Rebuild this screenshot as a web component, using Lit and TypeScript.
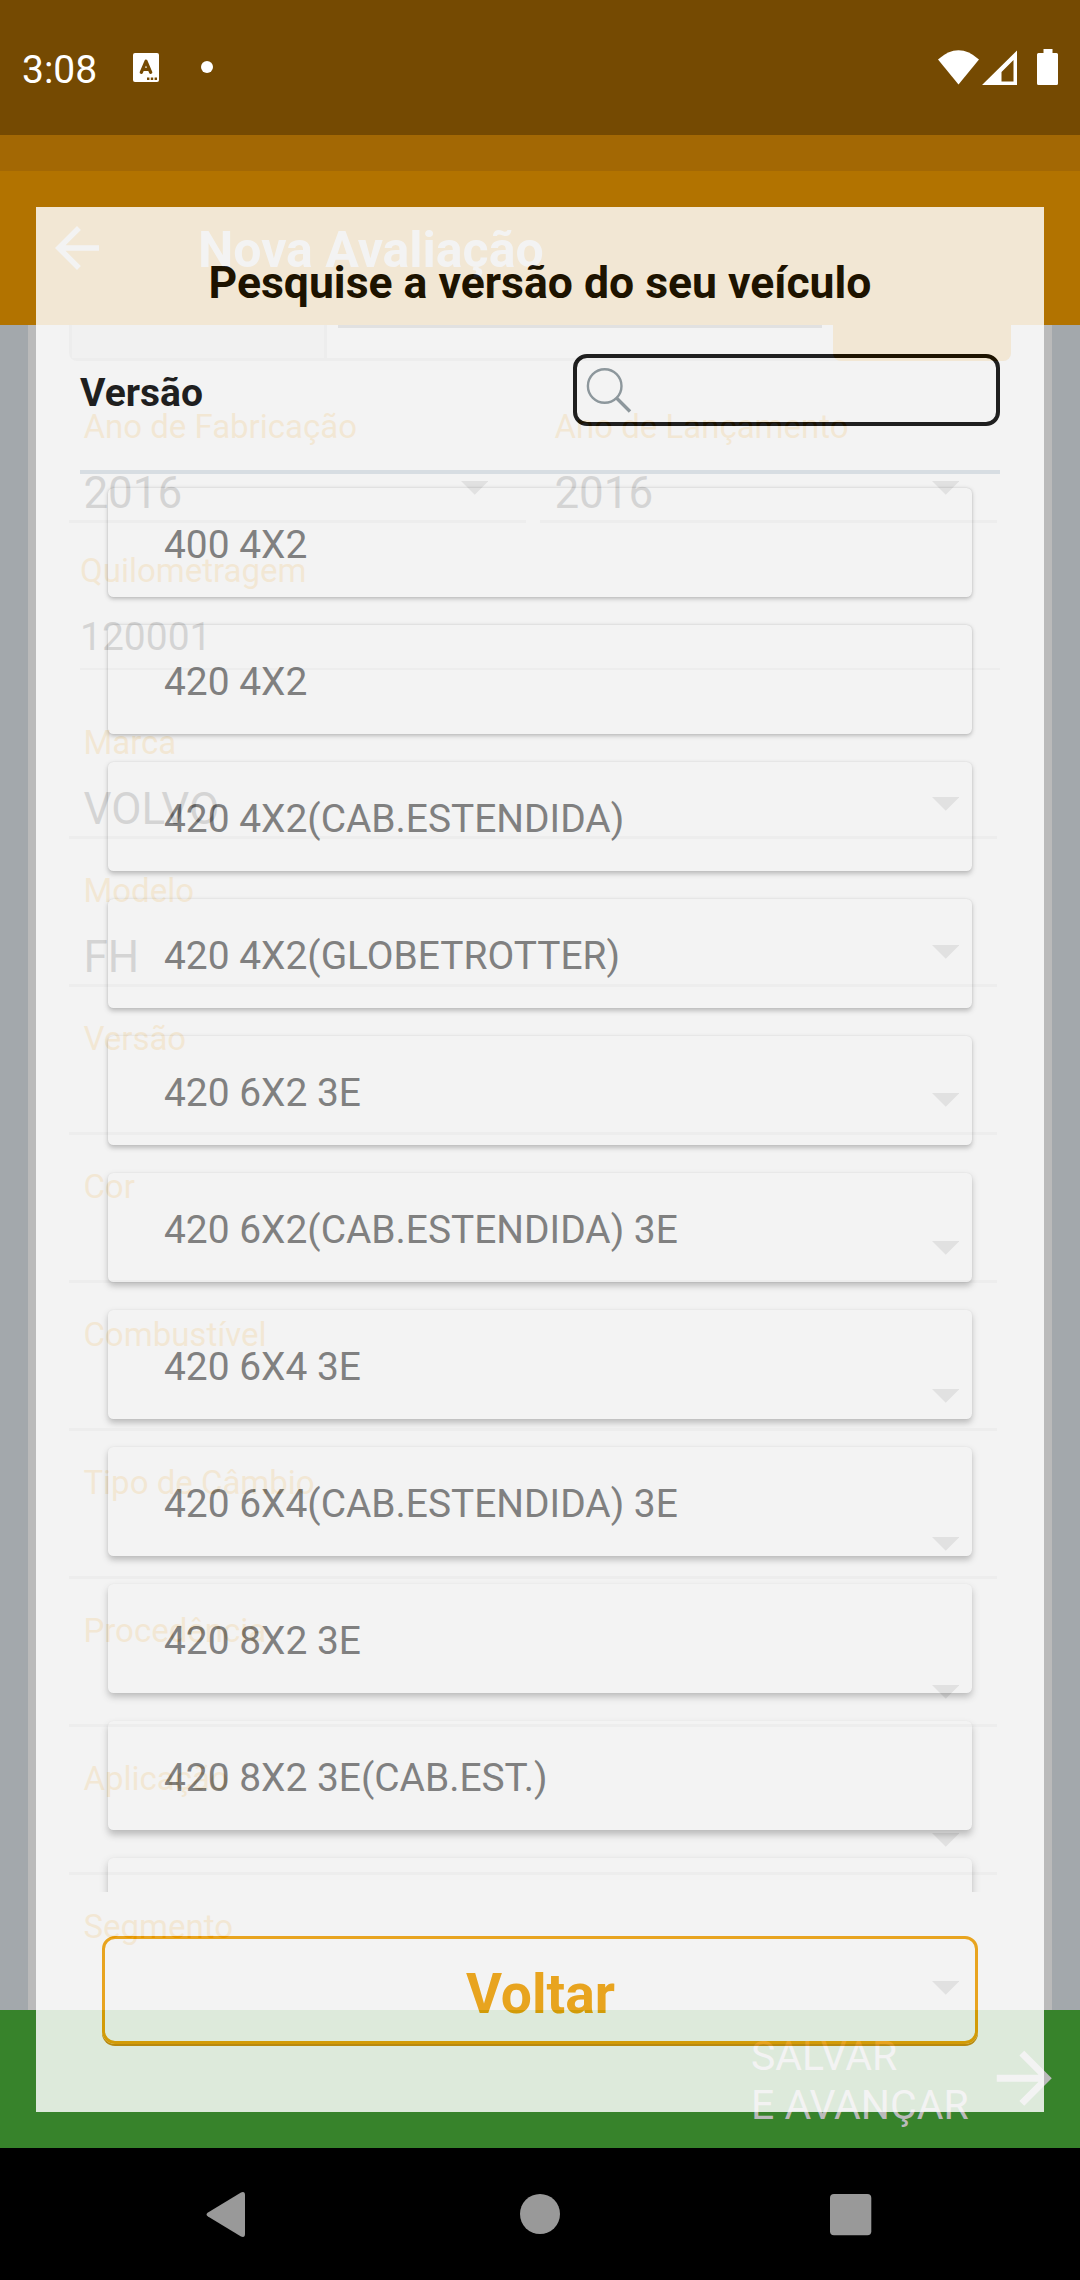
import { LitElement, html, css, svg } from "lit";
import { customElement } from "lit/decorators.js";

const VERSIONS = [
  "400 4X2",
  "420 4X2",
  "420 4X2(CAB.ESTENDIDA)",
  "420 4X2(GLOBETROTTER)",
  "420 6X2 3E",
  "420 6X2(CAB.ESTENDIDA) 3E",
  "420 6X4 3E",
  "420 6X4(CAB.ESTENDIDA) 3E",
  "420 8X2 3E",
  "420 8X2 3E(CAB.EST.)",
  "",
];

const FIELDS: Array<[string, string]> = [
  ["Marca", "VOLVO"],
  ["Modelo", "FH"],
  ["Versão", ""],
  ["Cor", ""],
  ["Combustível", ""],
  ["Tipo de Câmbio", ""],
  ["Procedência", ""],
  ["Aplicação", ""],
  ["Segmento", ""],
];

const arrowBack = svg`<path d="M20 11H7.83l5.59-5.59L12 4l-8 8 8 8 1.41-1.41L7.83 13H20v-2z"/>`;
const arrowForward = svg`<path d="M12 4l-1.41 1.41L16.17 11H4v2h12.17l-5.58 5.59L12 20l8-8z"/>`;

@customElement("form-page")
class FormPage extends LitElement {
  static styles = css`
    :host {
      display: flex;
      flex-direction: column;
      height: 2148px;
      background: #a3a8ac;
      font-family: Roboto, "Liberation Sans", sans-serif;
    }
    .strip { flex: none; height: 36px; margin-top: 135px; background: #a36804; }
    .appbar {
      flex: none;
      height: 154px;
      box-sizing: border-box;
      background: #b27300;
      color: #bababa;
      fill: #bababa;
      display: flex;
      align-items: center;
      padding-left: 44px;
      font-size: 50px;
      font-weight: 700;
    }
    .back { width: 66px; height: 66px; margin-right: 88px; }
    .heading { padding-top: 3px; }
    .body { flex: 1; overflow: hidden; margin: 0 28px; padding: 0 55px 0 41px; background: #bababa; }
    .plate {
      height: 36px;
      box-sizing: border-box;
      width: 942px;
      display: flex;
      border: 3px solid #979797;
      border-top: 0;
      border-radius: 0 0 8px 8px;
    }
    .cell { width: 252px; border-right: 3px solid #979797; background: #b1b1b1; }
    .entry { width: 484px; height: 3px; margin-left: 11px; background: #515151; }
    .go { width: 178px; height: 36px; margin: 0 -3px 0 auto; background: #b27300; border-radius: 0 0 8px 8px; }
    .pair { display: flex; gap: 14px; margin-top: 14px; }
    .pair .field { width: 457px; }
    .field {
      height: 148px;
      width: 928px;
      box-sizing: border-box;
      border-bottom: 3px solid #999;
      padding: 33px 38px 0 14.4px;
    }
    .label { color: #b27300; font-size: 33px; line-height: 38px; }
    .row { display: flex; justify-content: space-between; margin-top: 21px; height: 52px; }
    .value { color: #000; font-size: 44px; line-height: 52px; }
    .caret { width: 27.5px; height: 13.75px; margin-top: 14px; fill: #505050; }
    .km {
      height: 146.5px;
      width: 920px;
      box-sizing: border-box;
      margin: 0 0 21.5px 11px;
      border-bottom: 2.5px solid #999;
      padding-top: 29px;
    }
    .km-value { font-size: 39px; line-height: 46px; margin-top: 24px; color: #000; }
    .footer {
      flex: none;
      height: 138px;
      box-sizing: border-box;
      background: #37832b;
      color: #bababa;
      fill: #bababa;
      display: flex;
      justify-content: flex-end;
      padding: 22px 15px 0 0;
      font-size: 41px;
      line-height: 48.6px;
    }
    .save { width: 231.5px; white-space: nowrap; }
    .next { width: 82.5px; height: 82.5px; margin-top: 5px; }
  `;

  caret() {
    return html`<svg class="caret" viewBox="0 0 10 5"><path d="M0 0l5 5 5-5z" /></svg>`;
  }

  field(label: string, value: string) {
    return html`<div class="field">
      <div class="label">${label}</div>
      <div class="row"><span class="value">${value}</span>${this.caret()}</div>
    </div>`;
  }

  render() {
    return html`
      <div class="strip"></div>
      <div class="appbar">
        <svg class="back" viewBox="0 0 24 24">${arrowBack}</svg><span class="heading">Nova Avaliação</span>
      </div>
      <div class="body">
        <div class="plate"><div class="cell"></div><div class="entry"></div><div class="go"></div></div>
        <div class="pair">${this.field("Ano de Fabricação", "2016")}${this.field("Ano de Lançamento", "2016")}</div>
        <div class="km"><div class="label">Quilometragem</div><div class="km-value">120001</div></div>
        ${FIELDS.map(([l, v]) => this.field(l, v))}
      </div>
      <div class="footer">
        <div class="save">SALVAR<br />E AVANÇAR</div>
        <svg class="next" viewBox="0 0 24 24">${arrowForward}</svg>
      </div>
    `;
  }
}

@customElement("version-dialog")
class VersionDialog extends LitElement {
  static styles = css`
    :host {
      display: flex;
      flex-direction: column;
      box-sizing: border-box;
      background: #fff;
      opacity: 0.833;
      color: #000;
      font-family: Roboto, "Liberation Sans", sans-serif;
    }
    .title { height: 52px; margin-top: 50px; text-align: center; font-size: 44.5px; line-height: 52px; font-weight: 700; }
    .search-row { display: flex; justify-content: space-between; align-items: center; margin: 45px 44px 0; height: 72px; }
    .name { font-size: 39px; line-height: 46px; font-weight: 700; padding-top: 5px; }
    .search { width: 427px; height: 72px; box-sizing: border-box; border: 4px solid #000; border-radius: 14px; padding: 8px 9px; }
    .glass { display: block; width: 48px; height: 48px; fill: none; stroke: #859197; }
    .rule { height: 4px; margin: 44px 44px 0; background: #dee5eb; }
    .list { height: 1418px; overflow: hidden; padding: 13.5px 72px 0; box-sizing: border-box; display: flex; flex-direction: column; gap: 27.5px; }
    .card {
      flex: none;
      height: 109.5px;
      box-sizing: border-box;
      padding: 34.5px 56px 0;
      background: #fff;
      border-radius: 5.5px;
      box-shadow: 0 var(--drop) var(--soft) rgba(0, 0, 0, 0.26), 0 0 2px rgba(0, 0, 0, var(--rim));
      font-size: 38.9px;
      line-height: 46px;
      color: #757575;
    }
    .return {
      height: 108px;
      box-sizing: border-box;
      margin: 44px 66px 0;
      border: 3px solid #f2a000;
      border-radius: 13px;
      box-shadow: 0 2px 0 #d28b0a;
      color: #f2a000;
      font-size: 55.2px;
      line-height: 111px;
      font-weight: 700;
      text-align: center;
      text-indent: 1px;
    }
  `;

  shadow(i: number) {
    const drop = (1.6 + i * 0.3).toFixed(2);
    const soft = (4 + i * 0.4).toFixed(1);
    const rim = (0.1 - i * 0.007).toFixed(3);
    return `--drop:${drop}px;--soft:${soft}px;--rim:${rim}`;
  }

  render() {
    return html`
      <div class="title">Pesquise a versão do seu veículo</div>
      <div class="search-row">
        <span class="name">Versão</span>
        <div class="search">
          <svg class="glass" viewBox="0 0 48 48">
            <circle cx="18.7" cy="20" r="16.8" stroke-width="2.4" />
            <path d="M30.5 32L44 45.5" stroke-width="3.4" />
          </svg>
        </div>
      </div>
      <div class="rule"></div>
      <div class="list">
        ${VERSIONS.map((v, i) => html`<div class="card" style=${this.shadow(i)}>${v}</div>`)}
      </div>
      <div class="return">Voltar</div>
    `;
  }
}

@customElement("app-root")
class AppRoot extends LitElement {
  static styles = css`
    :host {
      display: block;
      position: relative;
      width: 1080px;
      height: 2280px;
      overflow: hidden;
      background: #000;
      font-family: Roboto, "Liberation Sans", sans-serif;
    }
    .status {
      position: absolute;
      inset: 0 0 auto;
      height: 135px;
      box-sizing: border-box;
      background: #754a02;
      color: #fff;
      display: flex;
      align-items: flex-start;
      padding: 46px 22px 0 22px;
      font-size: 39px;
      line-height: 48px;
    }
    .status svg { fill: #fff; }
    .clock { width: 111px; }
    .app { width: 26px; height: 29px; margin-top: 7px; }
    .dot { width: 12px; height: 12px; border-radius: 50%; background: #fff; margin: 15px auto 0 42px; }
    .system { width: 122px; height: 38px; margin-top: 2px; }
    .dialog { position: absolute; left: 36px; top: 207px; width: 1008px; height: 1905px; }
    .nav { height: 132px; }
    .nav svg { display: block; width: 1080px; height: 132px; fill: #999; }
  `;

  render() {
    return html`
      <form-page></form-page>
      <div class="nav">
        <svg viewBox="0 0 1080 132">
          <path d="M208 64.5L241 44.5Q245 43 245 47V86Q245 90 241 88.500L208 68.500Q205 66.500 208 64.500Z" />
          <circle cx="540" cy="66" r="20" />
          <rect x="830" y="46" width="41.300" height="41.300" rx="4" />
        </svg>
      </div>
      <div class="status">
        <span class="clock">3:08</span>
        <svg class="app" viewBox="0 0 26 29">
          <path d="M2 0H24Q26 0 26 2V27Q26 29 24 29H2Q0 29 0 27V2Q0 0 2 0Z" />
          <path d="M8.300 19.300L13 8.300L17.700 19.300M9.500 16.300H16.500" style="fill:none;stroke:#754a02;stroke-width:3.300;stroke-linecap:round;stroke-linejoin:round" />
          <path d="M14 24.500h2.400v2.400H14zM17.800 24.500h2.400v2.400H17.800zM21.600 24.500h2.400v2.400H21.600z" style="fill:#754a02" />
        </svg>
        <span class="dot"></span>
        <svg class="system" viewBox="0 0 122 38">
          <path d="M2 11.500Q22.500 -7 43 11.500L22.500 36.500Z" />
          <path fill-rule="evenodd" d="M46 37L81 2.500V37ZM65.500 33.500H77.500V12L65.500 24Z" />
          <path d="M107.500 1H116.500V5H120.500Q122 5 122 6.500V35.500Q122 37 120.500 37H102.500Q101 37 101 35.500V6.500Q101 5 102.500 5H107.500Z" />
        </svg>
      </div>
      <version-dialog class="dialog"></version-dialog>
    `;
  }
}
